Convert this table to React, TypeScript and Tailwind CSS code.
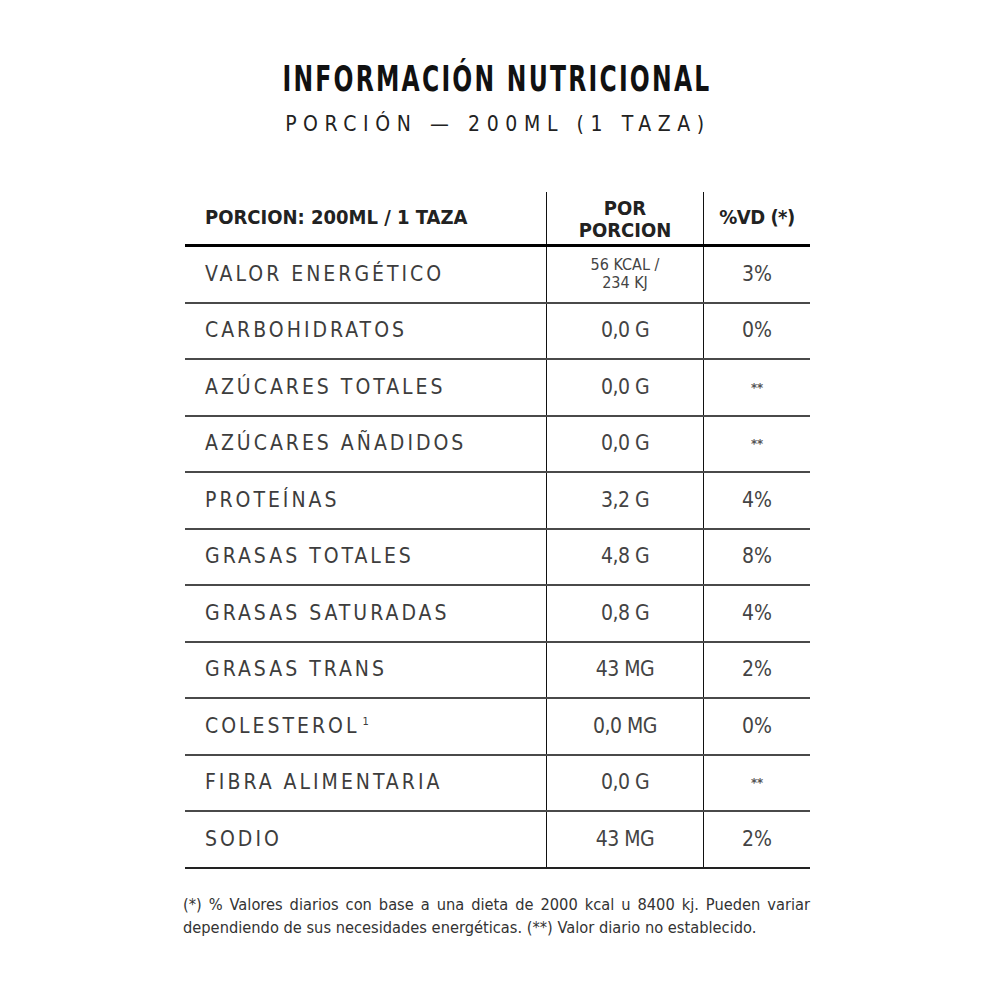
const font = "font-['DejaVu_Sans_Condensed','Liberation_Sans_Narrow',Roboto,sans-serif]"

interface Row {
  label: string
  sup?: string
  value: string
  small?: boolean
  vd: string
}

const rows: Row[] = [
  { label: "VALOR ENERGÉTICO", value: "56 KCAL /\n234 KJ", small: true, vd: "3%" },
  { label: "CARBOHIDRATOS", value: "0,0 G", vd: "0%" },
  { label: "AZÚCARES TOTALES", value: "0,0 G", vd: "**" },
  { label: "AZÚCARES AÑADIDOS", value: "0,0 G", vd: "**" },
  { label: "PROTEÍNAS", value: "3,2 G", vd: "4%" },
  { label: "GRASAS TOTALES", value: "4,8 G", vd: "8%" },
  { label: "GRASAS SATURADAS", value: "0,8 G", vd: "4%" },
  { label: "GRASAS TRANS", value: "43 MG", vd: "2%" },
  { label: "COLESTEROL", sup: "1", value: "0,0 MG", vd: "0%" },
  { label: "FIBRA ALIMENTARIA", value: "0,0 G", vd: "**" },
  { label: "SODIO", value: "43 MG", vd: "2%" },
]

export default function App() {
  return (
    <div className={`min-h-screen w-[1000px] bg-white ${font}`}>
      <div className="ml-[-7px] pt-[62px] text-center">
        <h1 className="inline-block scale-x-[0.745] text-[35px] leading-[35px] font-bold tracking-[3px] text-[#111]">
          INFORMACIÓN NUTRICIONAL
        </h1>
        <p className="mt-[16px] ml-[3px] text-[21px] leading-[21px] tracking-[6.6px] text-[#222]">
          PORCIÓN — 200ML (1 TAZA)
        </p>
      </div>

      <div className="ml-[185px] mt-[57px] w-[625px]">
        {/* header */}
        <div className="flex h-[55px] border-b-[3px] border-black">
          <div className="flex w-[361px] items-center pb-[3px] pl-[20px] text-[20px] font-bold text-[#222]">
            PORCION: 200ML / 1 TAZA
          </div>
          <div className="flex w-[157px] flex-col items-center justify-center border-l-[1.5px] border-[#111] pt-[1px] text-[20px] leading-[22px] font-bold text-[#222]">
            <span>POR</span>
            <span>PORCION</span>
          </div>
          <div className="flex flex-1 items-center justify-center border-l-[1.5px] border-[#111] pb-[3px] text-[20px] font-bold tracking-[-0.5px] text-[#222]">
            %VD (*)
          </div>
        </div>

        {rows.map((row, i) => (
          <div
            key={row.label}
            className={`flex h-[56.5px] border-b-2 ${i === rows.length - 1 ? "border-[#222]" : "border-[#4a4a4a]"}`}
          >
            <div className="flex w-[361px] items-center pl-[20px] text-[21px] tracking-[3px] text-[#3d3d3d]">
              {row.label}
              {row.sup && <sup className="relative -top-[4px] ml-[3px] text-[11px] tracking-normal">{row.sup}</sup>}
            </div>
            <div className="flex w-[157px] items-center justify-center border-l-[1.5px] border-[#111] text-center text-[#444]">
              {row.small ? (
                <span className="whitespace-pre-line text-[16px] leading-[18px]">{row.value}</span>
              ) : (
                <span className="text-[21px] tracking-[-0.5px]">{row.value}</span>
              )}
            </div>
            <div className="flex flex-1 items-center justify-center border-l-[1.5px] border-[#111] text-[#444]">
              {row.vd === "**" ? (
                <span className="text-[13px] font-bold text-[#555]">**</span>
              ) : (
                <span className="text-[21px]">{row.vd}</span>
              )}
            </div>
          </div>
        ))}

        <p className="mt-[24px] ml-[-2px] text-justify text-[16.3px] leading-[23px] text-[#333] [text-align-last:left]">
          (*) % Valores diarios con base a una dieta de 2000 kcal u 8400 kj. Pueden variar dependiendo de sus
          necesidades energéticas. (**) Valor diario no establecido.
        </p>
      </div>
    </div>
  )
}
